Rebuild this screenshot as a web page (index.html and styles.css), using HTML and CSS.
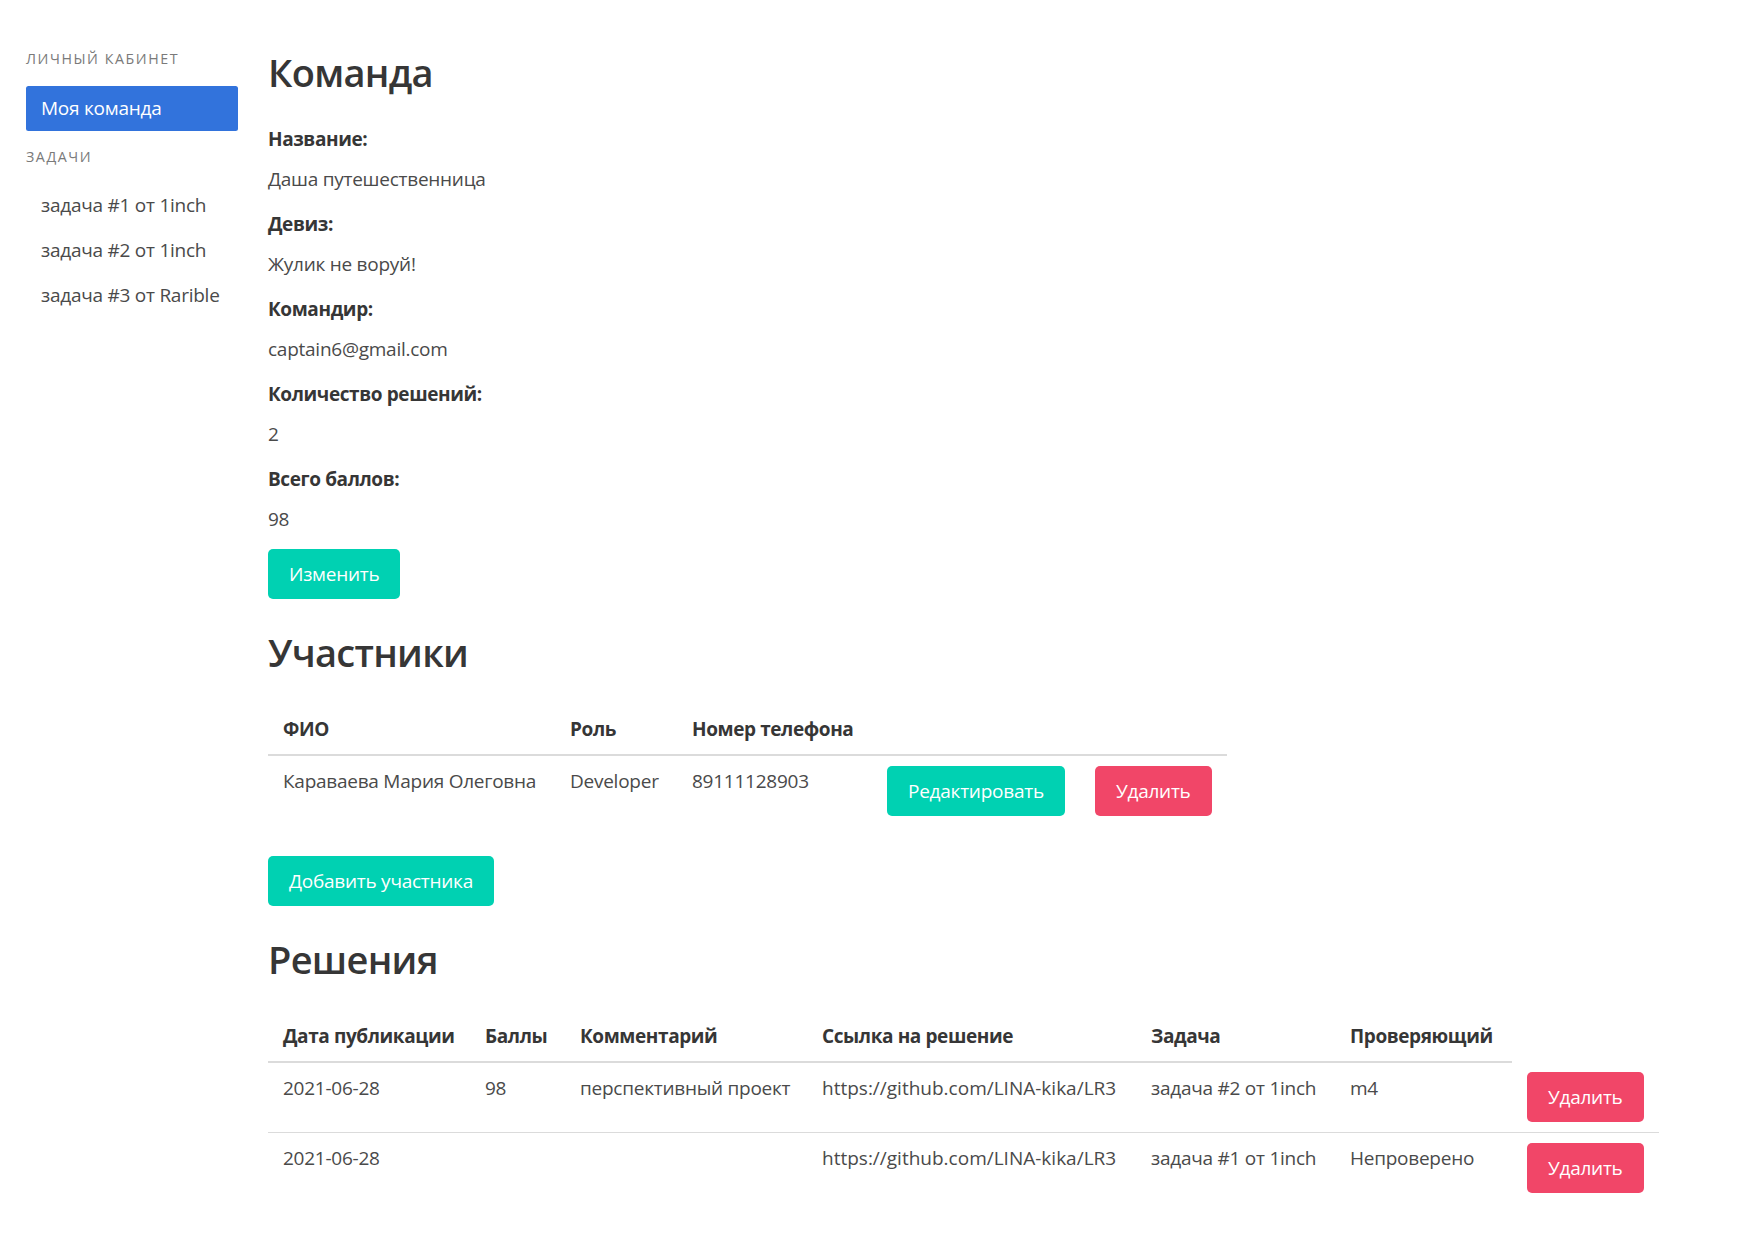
FILE: index.html
```html
<!DOCTYPE html>
<html lang="ru">
<head>
<meta charset="utf-8">
<title>Команда</title>
<link rel="stylesheet" href="styles.css">
</head>
<body>
<div class="page">
  <aside class="menu">
    <p class="menu-label">Личный кабинет</p>
    <ul class="menu-list">
      <li><a class="is-active">Моя команда</a></li>
    </ul>
    <p class="menu-label">Задачи</p>
    <ul class="menu-list">
      <li><a>задача #1 от 1inch</a></li>
      <li><a>задача #2 от 1inch</a></li>
      <li><a>задача #3 от Rarible</a></li>
    </ul>
  </aside>
  <main class="main">
    <h1 class="title">Команда</h1>
    <div class="field"><p class="label">Название:</p><p class="value">Даша путешественница</p></div>
    <div class="field"><p class="label">Девиз:</p><p class="value">Жулик не воруй!</p></div>
    <div class="field"><p class="label">Командир:</p><p class="value">captain6@gmail.com</p></div>
    <div class="field"><p class="label">Количество решений:</p><p class="value">2</p></div>
    <div class="field"><p class="label">Всего баллов:</p><p class="value">98</p></div>
    <div class="block"><button class="button is-primary">Изменить</button></div>

    <h1 class="title">Участники</h1>
    <table class="table">
      <thead>
        <tr>
          <th class="w-fio">ФИО</th>
          <th class="w-role">Роль</th>
          <th class="w-phone">Номер телефона</th>
          <th class="w-edit"></th>
          <th class="w-del"></th>
        </tr>
      </thead>
      <tbody>
        <tr>
          <td>Караваева Мария Олеговна</td>
          <td>Developer</td>
          <td>89111128903</td>
          <td><button class="button is-primary">Редактировать</button></td>
          <td><button class="button is-danger">Удалить</button></td>
        </tr>
      </tbody>
    </table>
    <div class="block"><button class="button is-primary">Добавить участника</button></div>

    <h1 class="title">Решения</h1>
    <table class="table">
      <thead>
        <tr>
          <th class="w-date">Дата публикации</th>
          <th class="w-score">Баллы</th>
          <th class="w-comment">Комментарий</th>
          <th class="w-link">Ссылка на решение</th>
          <th class="w-task">Задача</th>
          <th class="w-reviewer">Проверяющий</th>
        </tr>
      </thead>
      <tbody>
        <tr>
          <td>2021-06-28</td>
          <td>98</td>
          <td>перспективный проект</td>
          <td class="latin">https://github.com/LINA-kika/LR3</td>
          <td>задача #2 от 1inch</td>
          <td>m4</td>
          <td class="w-del"><button class="button is-danger">Удалить</button></td>
        </tr>
        <tr>
          <td>2021-06-28</td>
          <td></td>
          <td></td>
          <td class="latin">https://github.com/LINA-kika/LR3</td>
          <td>задача #1 от 1inch</td>
          <td>Непроверено</td>
          <td class="w-del"><button class="button is-danger">Удалить</button></td>
        </tr>
      </tbody>
    </table>
  </main>
</div>
</body>
</html>
```

FILE: styles.css
```css
* { box-sizing: border-box; }

html, body {
  margin: 0;
  padding: 0;
  background: #fff;
}

body {
  font-family: "Open Sans", "Noto Sans", sans-serif;
  font-size: 19px;
  line-height: 30px;
  letter-spacing: -0.25px;
  color: #4a4a4a;
}

.page {
  display: flex;
  align-items: flex-start;
  gap: 30px;
  padding: 48px 0 40px 26px;
}

/* Sidebar menu */
.menu {
  flex: none;
  width: 212px;
}

.menu-label {
  margin: 0 0 15px;
  font-size: 14.25px;
  line-height: 22.5px;
  letter-spacing: 1.55px;
  text-transform: uppercase;
  color: #7a7a7a;
}

.menu-list + .menu-label {
  margin-top: 15px;
}

.menu-list {
  list-style: none;
  margin: 0;
  padding: 0;
}

.menu-list a {
  display: block;
  padding: 10px 15px;
  line-height: 25px;
  border-radius: 2.5px;
  color: #4a4a4a;
  white-space: nowrap;
  cursor: pointer;
}

.menu-list a.is-active {
  background: #3273dc;
  color: #fff;
}

/* Main content */
.main {
  flex: 1;
  min-width: 0;
}

.title {
  margin: 0 0 29px;
  padding-top: 2px;
  font-size: 38px;
  font-weight: 600;
  line-height: 45px;
  letter-spacing: -0.7px;
  color: #363636;
}

.field {
  margin-bottom: 15px;
}

.label {
  margin: 0 0 10px;
  font-weight: 700;
  letter-spacing: -0.4px;
  color: #363636;
}

.value {
  margin: 0;
}

.block {
  margin-bottom: 29px;
}

/* Buttons */
.button {
  display: inline-flex;
  align-items: center;
  justify-content: center;
  height: 50px;
  padding: 9px 20px;
  border: 1px solid transparent;
  border-radius: 5px;
  font-family: inherit;
  font-size: 19px;
  line-height: 30px;
  letter-spacing: -0.25px;
  color: #fff;
  vertical-align: top;
  cursor: pointer;
  white-space: nowrap;
}

.button.is-primary { background: #00d1b2; }
.button.is-danger { background: #f14668; }

/* Tables */
.table {
  border-collapse: collapse;
  border-spacing: 0;
  margin-bottom: 30px;
}

.table th,
.table td {
  padding: 10px 15px;
  vertical-align: top;
  text-align: left;
  border: 0 solid #dbdbdb;
  border-bottom-width: 1px;
  white-space: nowrap;
}

.table th {
  border-bottom-width: 2px;
  font-weight: 700;
  letter-spacing: -0.4px;
  color: #363636;
}

.table td.latin {
  letter-spacing: 0;
}

.table tbody tr:last-child td {
  border-bottom-width: 0;
}

.w-fio { width: 287px; }
.w-role { width: 122px; }
.w-phone { width: 195px; }
.w-edit { width: 208px; }
.w-del { width: 145px; }

.w-date { width: 202px; }
.w-score { width: 95px; }
.w-comment { width: 242px; }
.w-link { width: 329px; }
.w-task { width: 199px; }
.w-reviewer { width: 177px; }
```
